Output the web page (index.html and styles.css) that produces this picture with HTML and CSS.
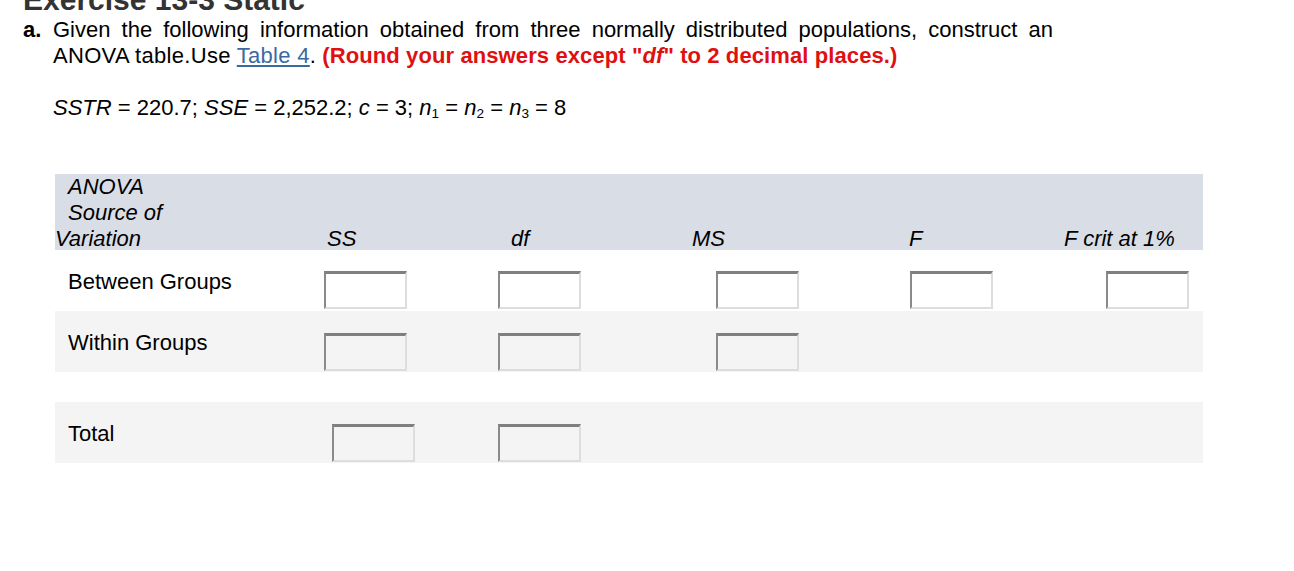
FILE: index.html
```html
<!DOCTYPE html>
<html lang="en">
<head>
<meta charset="utf-8">
<title>Exercise 13-3 Static</title>
<link rel="stylesheet" href="styles.css">
</head>
<body>
<div class="page">
  <h1 class="title">Exercise 13-3 Static</h1>
  <div class="question">
    <div class="marker">a.</div>
    <div class="content">
      <p class="prompt">Given the following information obtained from three normally distributed populations, construct an <span class="wide">ANOVA table.Use <a class="link" href="#">Table 4</a>.</span> <strong class="note">(Round your answers except "<em>df</em>" to 2 decimal places.)</strong></p>
      <p class="given"><em>SSTR</em> = 220.7; <em>SSE</em> = 2,252.2; <em>c</em> = 3; <em>n</em><sub class="sub">1</sub> = <em>n</em><sub class="sub">2</sub> = <em>n</em><sub class="sub">3</sub> = 8</p>
    </div>
  </div>

  <div class="anova">
    <div class="row head">
      <div class="hcell first">
        <span class="hline indent">ANOVA</span>
        <span class="hline indent">Source of</span>
        <span class="hline">Variation</span>
      </div>
      <div class="hcell h-ss">SS</div>
      <div class="hcell h-df">df</div>
      <div class="hcell h-ms">MS</div>
      <div class="hcell h-f">F</div>
      <div class="hcell h-fc">F crit at 1%</div>
    </div>
    <div class="row">
      <div class="label">Between Groups</div>
      <input class="box i-ss" type="text">
      <input class="box i-df" type="text">
      <input class="box i-ms" type="text">
      <input class="box i-f" type="text">
      <input class="box i-fc" type="text">
    </div>
    <div class="row alt">
      <div class="label">Within Groups</div>
      <input class="box i-ss" type="text">
      <input class="box i-df" type="text">
      <input class="box i-ms" type="text">
    </div>
    <div class="row alt total">
      <div class="label">Total</div>
      <input class="box i-ss-total" type="text">
      <input class="box i-df" type="text">
    </div>
  </div>
</div>
</body>
</html>
```

FILE: styles.css
```css
html, body {
  margin: 0;
  padding: 0;
  background: #ffffff;
}

body {
  font-family: "Liberation Sans", Arial, sans-serif;
  font-size: 22px;
  color: #000;
  overflow: hidden;
}

.page {
  padding-left: 23px;
}

.title {
  margin: -17px 0 0 0;
  font-size: 30px;
  line-height: 34px;
  font-weight: bold;
  color: #333333;
}

.question {
  display: flex;
}

.marker {
  width: 30px;
  font-weight: bold;
  line-height: 26px;
  flex: none;
}

.content {
  width: 1000px;
}

.prompt {
  margin: 0;
  line-height: 26px;
  text-align: justify;
}

.wide {
  letter-spacing: 0.3px;
}

.link {
  color: #3b6aa0;
  text-decoration: underline;
}

.note {
  color: #e01010;
  letter-spacing: 0.1px;
}

.given {
  margin: 26px 0 0 0;
  line-height: 26px;
}

.sub {
  font-size: 0.62em;
  vertical-align: baseline;
  position: relative;
  top: 0.22em;
  line-height: 0;
}

/* ANOVA table */
.anova {
  margin: 53px 0 0 32px;
  width: 1148px;
}

.row {
  display: grid;
  grid-template-columns: 265px 170px 190px 220px 150px 153px;
  height: 61px;
  align-items: start;
}

.row.alt {
  background: #f4f4f4;
}

.row.total {
  margin-top: 30px;
}

.row.head {
  height: 76px;
  background: #d9dde6;
  align-items: end;
}

.hcell {
  font-style: italic;
  white-space: nowrap;
}

.hline {
  display: block;
}

.hline.indent {
  padding-left: 13px;
}

.h-ss { margin-left: 7px; }
.h-df { margin-left: 21px; }
.h-ms { margin-left: 12px; }
.h-f  { margin-left: 9px; }
.h-fc { margin-left: 14px; }

.label {
  padding: 19px 0 0 13px;
  white-space: nowrap;
}

.box {
  box-sizing: border-box;
  width: 83px;
  height: 38px;
  margin-top: 21px;
  padding: 0;
  background: transparent;
  border-top: 3px solid #7f7f7f;
  border-left: 2px solid #8a8a8a;
  border-right: 2px solid #dddddd;
  border-bottom: 2px solid #dddddd;
  font-family: inherit;
  font-size: 16px;
}

.i-ss { margin-left: 4px; }
.i-ss-total { margin-left: 12px; }
.i-df { margin-left: 8px; }
.i-ms { margin-left: 36px; }
.i-f  { margin-left: 10px; }
.i-fc { margin-left: 56px; }

.row.total .box,
.row.alt .box {
  margin-top: 22px;
}
```
